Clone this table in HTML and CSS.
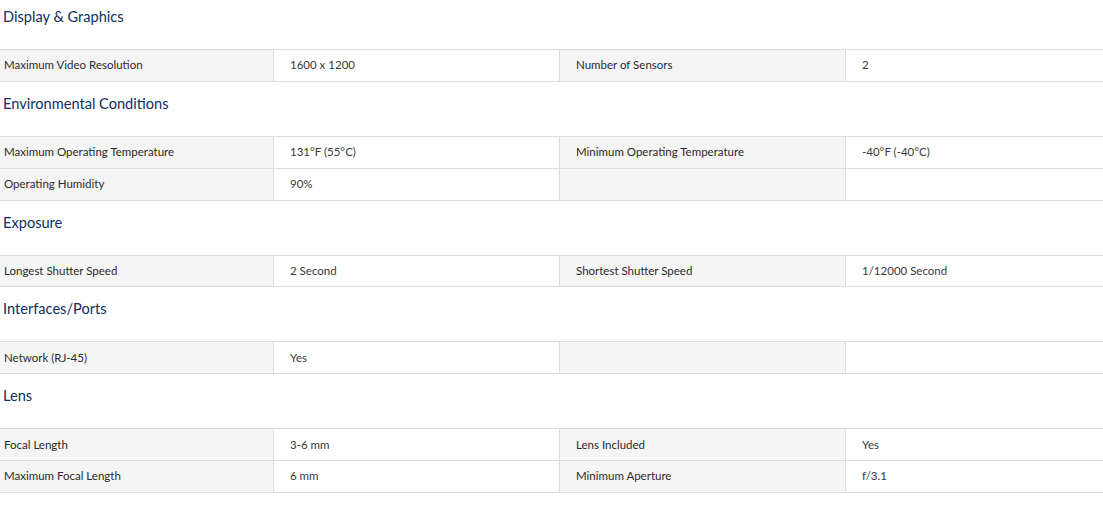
FILE: index.html
```html
<!DOCTYPE html>
<html lang="en">
<head>
<meta charset="utf-8">
<title>Specifications</title>
<link rel="stylesheet" href="styles.css">
</head>
<body>
<div class="specs">
  <section class="spec-section">
    <h3 class="spec-title">Display &amp; Graphics</h3>
    <div class="spec-table">
      <div class="spec-row">
        <div class="cell label first">Maximum Video Resolution</div>
        <div class="cell value">1600 x 1200</div>
        <div class="cell label">Number of Sensors</div>
        <div class="cell value">2</div>
      </div>
    </div>
  </section>
  <section class="spec-section">
    <h3 class="spec-title">Environmental Conditions</h3>
    <div class="spec-table">
      <div class="spec-row">
        <div class="cell label first">Maximum Operating Temperature</div>
        <div class="cell value">131°F (55°C)</div>
        <div class="cell label">Minimum Operating Temperature</div>
        <div class="cell value">-40°F (-40°C)</div>
      </div>
      <div class="spec-row">
        <div class="cell label first">Operating Humidity</div>
        <div class="cell value">90%</div>
        <div class="cell label"></div>
        <div class="cell value"></div>
      </div>
    </div>
  </section>
  <section class="spec-section">
    <h3 class="spec-title">Exposure</h3>
    <div class="spec-table">
      <div class="spec-row">
        <div class="cell label first">Longest Shutter Speed</div>
        <div class="cell value">2 Second</div>
        <div class="cell label">Shortest Shutter Speed</div>
        <div class="cell value">1/12000 Second</div>
      </div>
    </div>
  </section>
  <section class="spec-section">
    <h3 class="spec-title">Interfaces/Ports</h3>
    <div class="spec-table">
      <div class="spec-row">
        <div class="cell label first">Network (RJ-45)</div>
        <div class="cell value">Yes</div>
        <div class="cell label"></div>
        <div class="cell value"></div>
      </div>
    </div>
  </section>
  <section class="spec-section">
    <h3 class="spec-title">Lens</h3>
    <div class="spec-table">
      <div class="spec-row">
        <div class="cell label first">Focal Length</div>
        <div class="cell value">3-6 mm</div>
        <div class="cell label">Lens Included</div>
        <div class="cell value">Yes</div>
      </div>
      <div class="spec-row">
        <div class="cell label first">Maximum Focal Length</div>
        <div class="cell value">6 mm</div>
        <div class="cell label">Minimum Aperture</div>
        <div class="cell value">f/3.1</div>
      </div>
    </div>
  </section>
</div>
</body>
</html>
```
FILE: styles.css
```css
html, body {
  margin: 0;
  padding: 0;
  background: #ffffff;
}

body {
  font-family: "Lato", "Noto Sans", "Liberation Sans", sans-serif;
  color: #333333;
}

.specs {
  display: flex;
  flex-direction: column;
}

.spec-section + .spec-section {
  margin-top: 5px;
}

.spec-title {
  margin: 0;
  padding: 7px 3px 22px;
  font-size: 14.6px;
  line-height: 20px;
  font-weight: 400;
  color: #0d2f5f;
}

.spec-table {
  border-top: 1px solid #dcdcdc;
}

.spec-row {
  display: grid;
  grid-template-columns: 273px 286px 286px 1fr;
  border-bottom: 1px solid #dcdcdc;
}

.cell {
  box-sizing: border-box;
  height: 30.85px;
  display: flex;
  align-items: center;
  padding-left: 16px;
  padding-bottom: 1px;
  font-size: 11.5px;
  border-left: 1px solid #dcdcdc;
}

.cell.first {
  padding-left: 4px;
  border-left: 0;
}

.label {
  background: #f5f5f5;
  color: #2a2a2a;
}

.value {
  background: #ffffff;
  color: #3a3a3a;
}
```
